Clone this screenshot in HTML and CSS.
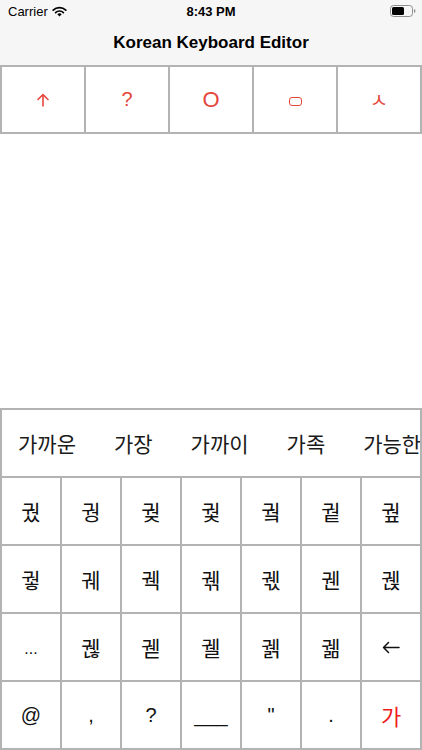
FILE: index.html
```html
<!DOCTYPE html>
<html lang="ko">
<head>
<meta charset="utf-8">
<title>Korean Keyboard Editor</title>
<link rel="stylesheet" href="styles.css">
</head>
<body>
<div class="app">
  <header class="header">
    <div class="status">
      <div class="status-left">
        <span class="carrier">Carrier</span>
        <svg class="wifi" width="15" height="11" viewBox="0 0 15 11">
          <path d="M7.5 10.6 L5.3 8.3 A3.2 3.2 0 0 1 9.7 8.3 Z" fill="#000"/>
          <path d="M3.6 6.6 A5.6 5.6 0 0 1 11.4 6.6" fill="none" stroke="#000" stroke-width="1.7" stroke-linecap="round"/>
          <path d="M1.2 4.2 A9 9 0 0 1 13.8 4.2" fill="none" stroke="#000" stroke-width="1.7" stroke-linecap="round"/>
        </svg>
      </div>
      <div class="time">8:43 PM</div>
      <div class="status-right">
        <svg class="battery" width="26" height="12" viewBox="0 0 26 12">
          <rect x="0.5" y="0.5" width="22" height="11" rx="3" ry="3" fill="none" stroke="#8e8e8e" stroke-width="1"/>
          <rect x="2" y="2" width="12" height="8" rx="1.5" fill="#000"/>
          <path d="M24 4 Q25.5 4.3 25.5 6 Q25.5 7.7 24 8 Z" fill="#8e8e8e"/>
        </svg>
      </div>
    </div>
    <div class="nav-title">Korean Keyboard Editor</div>
  </header>

  <div class="toprow">
    <div class="tkey">
      <svg class="up" width="12" height="14" viewBox="0 0 12 14">
        <path d="M6 13 V1.5 M1 6.5 L6 1.5 L11 6.5" fill="none" stroke="#e6463c" stroke-width="1.6" stroke-linecap="round" stroke-linejoin="round"/>
      </svg>
    </div>
    <div class="tkey">?</div>
    <div class="tkey tkey-o">O</div>
    <div class="tkey"><span class="rbox"></span></div>
    <div class="tkey tkey-s">ㅅ</div>
  </div>

  <div class="spacer"></div>

  <div class="keyboard">
    <div class="suggest">
      <span class="sug">가까운</span>
      <span class="sug">가장</span>
      <span class="sug">가까이</span>
      <span class="sug">가족</span>
      <span class="sug">가능한</span>
    </div>
    <div class="keys">
      <div class="key">궜</div>
      <div class="key">궝</div>
      <div class="key">궞</div>
      <div class="key">궟</div>
      <div class="key">궠</div>
      <div class="key">궡</div>
      <div class="key">궢</div>

      <div class="key">궣</div>
      <div class="key">궤</div>
      <div class="key">궥</div>
      <div class="key">궦</div>
      <div class="key">궧</div>
      <div class="key">궨</div>
      <div class="key">궩</div>

      <div class="key key-dots">...</div>
      <div class="key">궪</div>
      <div class="key">궫</div>
      <div class="key">궬</div>
      <div class="key">궭</div>
      <div class="key">궮</div>
      <div class="key">
        <svg class="left" width="18" height="13" viewBox="0 0 18 13">
          <path d="M17 6.5 H1.5 M6.5 1.5 L1.5 6.5 L6.5 11.5" fill="none" stroke="#111" stroke-width="1.5" stroke-linecap="round" stroke-linejoin="round"/>
        </svg>
      </div>

      <div class="key key-sym">@</div>
      <div class="key key-sym">,</div>
      <div class="key key-sym">?</div>
      <div class="key key-sym">___</div>
      <div class="key key-sym">"</div>
      <div class="key key-sym">.</div>
      <div class="key key-red">가</div>
    </div>
  </div>
</div>
</body>
</html>
```

FILE: styles.css
```css
html, body {
  margin: 0;
  padding: 0;
  background: #ffffff;
}

body {
  font-family: "Liberation Sans", Arial, "Noto Sans CJK KR", sans-serif;
  color: #000;
}

.app {
  width: 422px;
  height: 750px;
  display: flex;
  flex-direction: column;
  overflow: hidden;
}

.header {
  background: #f7f6f7;
  height: 65px;
  display: flex;
  flex-direction: column;
}

.status {
  height: 22px;
  display: grid;
  grid-template-columns: 1fr auto 1fr;
  align-items: center;
  font-size: 13px;
}

.status-left {
  display: flex;
  align-items: center;
  gap: 4px;
  padding-left: 8px;
}

.carrier {
  font-size: 13px;
}

.wifi {
  display: block;
}

.time {
  font-weight: bold;
  font-size: 13px;
}

.status-right {
  display: flex;
  justify-content: flex-end;
  padding-right: 6px;
}

.battery {
  display: block;
}

.nav-title {
  flex: 1;
  display: flex;
  align-items: center;
  justify-content: center;
  font-size: 17px;
  font-weight: bold;
  padding-bottom: 1px;
}

.toprow {
  display: grid;
  grid-template-columns: repeat(5, 1fr);
  gap: 2px;
  padding: 2px;
  background: #b3b3b3;
}

.tkey {
  background: #fff;
  height: 65px;
  display: flex;
  align-items: center;
  justify-content: center;
  color: #e6463c;
  font-size: 20px;
}

.up {
  display: block;
}

.tkey-o {
  font-size: 22px;
}

.tkey-s {
  font-family: "Noto Sans CJK KR", sans-serif;
  font-size: 20px;
}

.rbox {
  display: block;
  width: 11px;
  height: 7px;
  border: 1.5px solid #e6463c;
  border-radius: 3px;
  margin-top: 3px;
}

.spacer {
  flex: 1;
  background: #fff;
}

.keyboard {
  background: #b3b3b3;
  padding: 2px;
  display: flex;
  flex-direction: column;
  gap: 2px;
}

.suggest {
  background: #fff;
  height: 66px;
  display: flex;
  align-items: center;
  gap: 38px;
  padding-left: 16px;
  overflow: hidden;
  white-space: nowrap;
  font-family: "Noto Sans CJK KR", sans-serif;
  font-size: 21px;
  color: #1a1a1a;
}

.sug {
  flex: none;
}

.keys {
  display: grid;
  grid-template-columns: repeat(7, 1fr);
  grid-auto-rows: 66px;
  gap: 2px;
}

.key {
  background: #fff;
  display: flex;
  align-items: center;
  justify-content: center;
  font-family: "Noto Sans CJK KR", sans-serif;
  font-size: 21px;
  color: #111;
}

.key-sym {
  font-family: "Liberation Sans", Arial, sans-serif;
  font-size: 20px;
}

.left {
  display: block;
}

.key-dots {
  font-family: "Liberation Sans", Arial, sans-serif;
  font-size: 16px;
  padding-top: 4px;
}

.key-red {
  color: #f01d1d;
  font-size: 22px;
}
```
